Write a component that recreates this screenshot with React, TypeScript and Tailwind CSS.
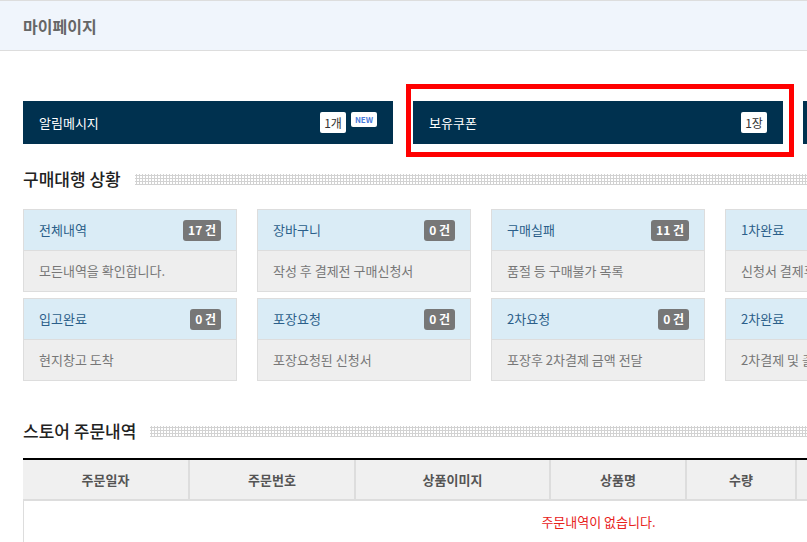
import React from "react";

const font = "font-['Noto_Sans_CJK_KR','Noto_Sans',sans-serif]";

const stats = [
    { title: "전체내역", count: 17, desc: "모든내역을 확인합니다." },
    { title: "장바구니", count: 0, desc: "작성 후 결제전 구매신청서" },
    { title: "구매실패", count: 11, desc: "품절 등 구매불가 목록" },
    { title: "1차완료", count: 0, desc: "신청서 결제후 구매진행" },
    { title: "구매완료", count: 0, desc: "구매완료된 신청서" },
    { title: "입고완료", count: 0, desc: "현지창고 도착" },
    { title: "포장요청", count: 0, desc: "포장요청된 신청서" },
    { title: "2차요청", count: 0, desc: "포장후 2차결제 금액 전달" },
    { title: "2차완료", count: 0, desc: "2차결제 및 출고대기" },
    { title: "출고완료", count: 0, desc: "배송이 시작되었습니다." },
];

const columns = [
    { label: "주문일자", w: "w-[165px]" },
    { label: "주문번호", w: "w-[166px]" },
    { label: "상품이미지", w: "w-[195px]" },
    { label: "상품명", w: "w-[136px]" },
    { label: "수량", w: "w-[110px]" },
    { label: "결제금액", w: "w-[140px]" },
    { label: "주문상태", w: "w-[238px]" },
];

const SectionTitle = ({ text }: { text: string }) => (
    <div className="flex items-center gap-[14px]">
        <h3 className="text-[17px] font-medium text-[#222] leading-none whitespace-nowrap">{text}</h3>
        <div className="flex-1 h-[11px] mt-[1px] bg-[radial-gradient(circle,#d2d2d2_1px,transparent_1.2px)] bg-[length:3px_3px]" />
    </div>
);

const StatCard = ({ title, count, desc }: { title: string; count: number; desc: string }) => (
    <div className="border border-[#dddddd] bg-[#eeeeee]">
        <div className="h-[41px] bg-[#daecf6] border-b border-[#dddddd] flex items-center justify-between pl-[15px] pr-[15px]">
            <span className="text-[13px] text-[#2b5f8a]">{title}</span>
            <span className="h-[21px] px-[5px] rounded-[3px] bg-[#777777] text-white text-[12px] font-bold flex items-center">
                {count} 건
            </span>
        </div>
        <div className="h-[40px] flex items-center pl-[15px] text-[13px] text-[#777] whitespace-nowrap">{desc}</div>
    </div>
);

export default function App() {
    return (
        <div className={`${font} w-[807px] h-[542px] overflow-hidden bg-white`}>
            {/* Page header */}
            <div className="h-[51px] border-y border-[#dddddd] bg-[#f0f5fc] flex items-center pl-[23px]">
                <h2 className="text-[16px] font-bold text-[#666]">마이페이지</h2>
            </div>

            <div className="w-[1150px] ml-[23px]">
                {/* Summary boxes */}
                <div className="grid grid-cols-3 gap-[20px] mt-[50px]">
                    <div className="h-[43px] bg-[#00314f] flex items-center justify-between pl-[16px] pr-[16px]">
                        <span className="text-[13px] text-white">알림메시지</span>
                        <div className="flex items-center gap-[5px]">
                            <span className="h-[21px] w-[26px] bg-white rounded-[2px] text-[12px] text-[#333] flex items-center justify-center">1개</span>
                            <span className="h-[15px] w-[26px] bg-white rounded-[2px] text-[8px] font-bold text-[#4a7bdc] flex items-center justify-center self-start">NEW</span>
                        </div>
                    </div>
                    <div className="relative h-[43px] bg-[#00314f] flex items-center justify-between pl-[16px] pr-[16px]">
                        <span className="text-[13px] text-white">보유쿠폰</span>
                        <span className="h-[21px] w-[26px] bg-white rounded-[2px] text-[12px] text-[#333] flex items-center justify-center">1장</span>
                        <div className="absolute -left-[7px] -top-[17px] w-[388px] h-[73px] border-[5px] border-[#ff0000] pointer-events-none" />
                    </div>
                    <div className="h-[43px] bg-[#00314f] flex items-center justify-between pl-[16px] pr-[16px]">
                        <span className="text-[13px] text-white">적립금</span>
                        <span className="h-[21px] px-[5px] bg-white rounded-[2px] text-[12px] text-[#333] flex items-center">0원</span>
                    </div>
                </div>

                {/* 구매대행 상황 */}
                <div className="mt-[26px]">
                    <SectionTitle text="구매대행 상황" />
                </div>
                <div className="grid grid-cols-5 gap-x-[20px] gap-y-[6px] mt-[22px]">
                    {stats.map((s) => (
                        <StatCard key={s.title} {...s} />
                    ))}
                </div>

                {/* 스토어 주문내역 */}
                <div className="mt-[41px]">
                    <SectionTitle text="스토어 주문내역" />
                </div>
                <div className="mt-[19px] border-t-2 border-black">
                    <div className="flex h-[41px] bg-[#f0f0f0] border-b-2 border-[#dddddd]">
                        {columns.map((c, i) => (
                            <div
                                key={c.label}
                                className={`${c.w} flex items-center justify-center text-[13px] font-bold text-[#555] ${i > 0 ? "border-l-2 border-[#dddddd]" : ""}`}
                            >
                                {c.label}
                            </div>
                        ))}
                    </div>
                    <div className="h-[60px] border-l border-[#dddddd] flex items-start justify-center pt-[11px]">
                        <span className="text-[13px] text-[#e8211a]">주문내역이 없습니다.</span>
                    </div>
                </div>
            </div>
        </div>
    );
}
